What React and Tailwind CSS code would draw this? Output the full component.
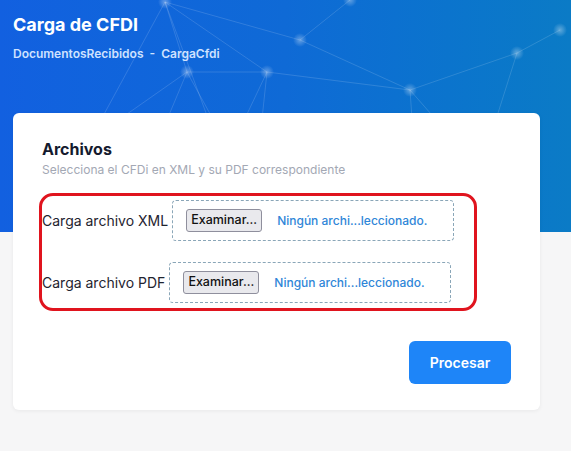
import React from "react";

function Network() {
  const nodes = [
    [165, 2], [187, 72], [267, 72], [410, 90], [517, 53], [300, 40], [90, 140], [230, 150], [480, 170], [560, 30], [350, 0], [120, 232], [250, 232], [420, 232],
  ];
  const edges = [
    [0, 1], [0, 2], [0, 5], [0, 6], [1, 2], [1, 7], [1, 11], [2, 7], [2, 3], [2, 12], [5, 3], [5, 10], [3, 4], [3, 8], [4, 9], [4, 8], [6, 11], [7, 12], [3, 13], [1, 6], [0, 12],
  ];
  return (
    <svg className="absolute inset-0 w-full h-full" viewBox="0 0 571 232" preserveAspectRatio="none">
      <defs>
        <radialGradient id="glow" cx="0.5" cy="0.5" r="0.5">
          <stop offset="0" stopColor="#ffffff" stopOpacity="0.35" />
          <stop offset="1" stopColor="#ffffff" stopOpacity="0" />
        </radialGradient>
      </defs>
      {edges.map(([a, b], i) => (
        <line key={i} x1={nodes[a][0]} y1={nodes[a][1]} x2={nodes[b][0]} y2={nodes[b][1]} stroke="#ffffff" strokeOpacity="0.14" strokeWidth="1" />
      ))}
      {nodes.map(([x, y], i) => (
        <circle key={i} cx={x} cy={y} r="7" fill="url(#glow)" />
      ))}
    </svg>
  );
}

function FileRow({ label }) {
  return (
    <div className="flex items-center">
      <span className="text-[14px] text-[#1f2430] whitespace-nowrap">{label}</span>
      <div className="ml-[4px] flex items-center h-[41px] w-[282px] border border-dashed border-[#8aa6b8] rounded-[4px]">
        <span className="ml-[13px] h-[23px] w-[76px] flex items-center justify-center bg-[#e9e9ed] border border-[#8f8f9d] rounded-[3px] text-[12.5px] text-[#111] font-medium">Examinar...</span>
        <span className="ml-[15px] text-[12px] text-[#2f86d8] font-medium">Ningún archi...leccionado.</span>
      </div>
    </div>
  );
}

export default function App() {
  return (
    <div className="relative w-[571px] h-[451px] bg-[#f6f6f7] overflow-hidden" style={{ fontFamily: "Inter, 'Noto Sans', sans-serif" }}>
      <div className="relative h-[232px] bg-gradient-to-r from-[#1260e0] via-[#0f6ad6] to-[#0b7bc6] overflow-hidden">
        <Network />
        <div className="relative px-[13px] pt-[12px]">
          <h1 className="text-[18px] font-bold text-white leading-[26px]">Carga de CFDI</h1>
          <p className="mt-[8px] text-[12px] font-semibold text-[#cfe2ff] leading-[16px]">
            DocumentosRecibidos&nbsp; -&nbsp; CargaCfdi
          </p>
        </div>
      </div>
      <div className="absolute left-[13px] top-[113px] w-[527px] h-[297px] bg-white rounded-[6px] shadow-[0_1px_4px_rgba(0,0,0,0.06)] px-[29px] pt-[26px]">
        <h2 className="text-[16px] font-bold text-[#141a2e] leading-[20px]">Archivos</h2>
        <p className="mt-[3px] text-[12px] text-[#a3a8b4] leading-[16px]">Selecciona el CFDi en XML y su PDF correspondiente</p>
        <div className="relative mt-[22px]">
          <div className="flex flex-col gap-[21px]">
            <FileRow label="Carga archivo XML" />
            <FileRow label="Carga archivo PDF" />
          </div>
          <div className="absolute left-[-3px] top-[-7px] w-[438px] h-[118px] border-[3px] border-[#e0141e] rounded-[14px] pointer-events-none" />
        </div>
        <div className="flex justify-end mt-[38px]">
          <button className="w-[102px] h-[43px] bg-[#1e85f8] rounded-[6px] text-white text-[14px] font-semibold">Procesar</button>
        </div>
      </div>
    </div>
  );
}
